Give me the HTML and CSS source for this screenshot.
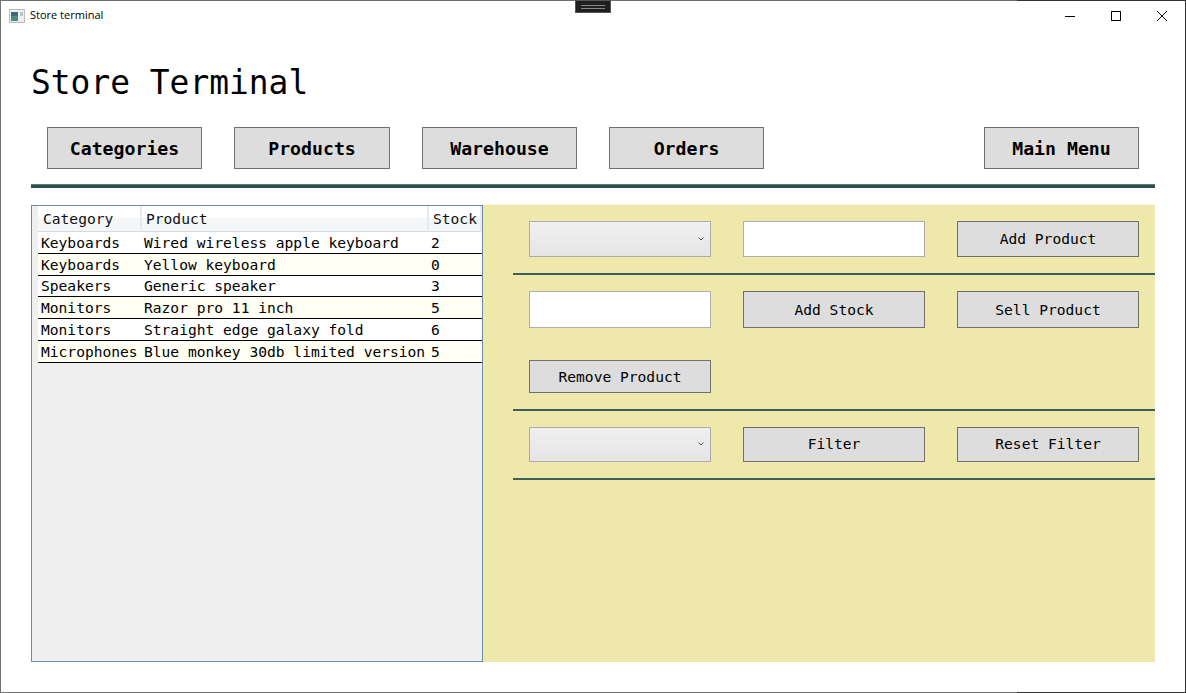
FILE: index.html
```html
<!DOCTYPE html>
<html lang="en">

<head>
    <meta charset="UTF-8">
    <meta name="viewport" content="width=device-width, initial-scale=1.0">
    <title>Store terminal</title>
    <link rel="stylesheet" href="styles.css">
</head>

<body>
    <div class="window">
        <div class="titlebar">
            <svg class="app-icon" width="16" height="16" viewBox="0 0 16 16">
                <rect x="0.5" y="1.5" width="15" height="13" fill="#eef0f0" stroke="#b8bcbc" />
                <rect x="2" y="4" width="7" height="9" fill="#4f8a80" />
                <rect x="2" y="4" width="7" height="4" fill="#3d6878" />
                <rect x="11" y="4" width="3" height="4" fill="#b9c6c6" />
            </svg>
            <span class="window-title">Store terminal</span>
            <div class="window-buttons">
                <svg class="window-btn" width="46" height="30" viewBox="0 0 46 30">
                    <path d="M18 15.5h10" stroke="#000" fill="none" />
                </svg>
                <svg class="window-btn" width="46" height="30" viewBox="0 0 46 30">
                    <rect x="18.5" y="10.5" width="9" height="9" stroke="#000" fill="none" />
                </svg>
                <svg class="window-btn" width="46" height="30" viewBox="0 0 46 30">
                    <path d="M18 10l10 10M28 10l-10 10" stroke="#000" fill="none" />
                </svg>
            </div>
        </div>
        <div class="grip"><span class="grip-lines"></span></div>

        <main class="content">
            <h1 class="page-title">Store Terminal</h1>

            <nav class="main-nav">
                <button class="nav-btn">Categories</button>
                <button class="nav-btn nav-btn-wide">Products</button>
                <button class="nav-btn">Warehouse</button>
                <button class="nav-btn">Orders</button>
                <button class="nav-btn nav-btn-last">Main Menu</button>
            </nav>
            <div class="rule-thick"></div>

            <section class="workspace">
                <div class="grid-panel">
                    <table class="stock-table">
                        <colgroup>
                            <col class="col-category">
                            <col class="col-product">
                            <col class="col-stock">
                        </colgroup>
                        <thead>
                            <tr>
                                <th>Category</th>
                                <th>Product</th>
                                <th>Stock</th>
                            </tr>
                        </thead>
                        <tbody>
                            <tr>
                                <td>Keyboards</td>
                                <td>Wired wireless apple keyboard</td>
                                <td>2</td>
                            </tr>
                            <tr>
                                <td>Keyboards</td>
                                <td>Yellow keyboard</td>
                                <td>0</td>
                            </tr>
                            <tr>
                                <td>Speakers</td>
                                <td>Generic speaker</td>
                                <td>3</td>
                            </tr>
                            <tr>
                                <td>Monitors</td>
                                <td>Razor pro 11 inch</td>
                                <td>5</td>
                            </tr>
                            <tr>
                                <td>Monitors</td>
                                <td>Straight edge galaxy fold</td>
                                <td>6</td>
                            </tr>
                            <tr>
                                <td>Microphones</td>
                                <td>Blue monkey 30db limited version</td>
                                <td>5</td>
                            </tr>
                        </tbody>
                    </table>
                </div>

                <div class="controls">
                    <div class="control-row row-add">
                        <div class="combo"><svg width="6" height="4" viewBox="0 0 6 4"><path d="M0.5 0.5L3 3l2.5-2.5" stroke="#555" fill="none" /></svg></div>
                        <input class="field" type="text">
                        <button class="action-btn">Add Product</button>
                    </div>
                    <div class="rule-thin"></div>
                    <div class="control-row row-stock">
                        <input class="field" type="text">
                        <button class="action-btn">Add Stock</button>
                        <button class="action-btn">Sell Product</button>
                    </div>
                    <div class="control-row row-remove">
                        <button class="action-btn">Remove Product</button>
                    </div>
                    <div class="rule-thin"></div>
                    <div class="control-row row-filter">
                        <div class="combo"><svg width="6" height="4" viewBox="0 0 6 4"><path d="M0.5 0.5L3 3l2.5-2.5" stroke="#555" fill="none" /></svg></div>
                        <button class="action-btn">Filter</button>
                        <button class="action-btn">Reset Filter</button>
                    </div>
                    <div class="rule-thin"></div>
                </div>
            </section>
        </main>
    </div>
</body>

</html>
```

FILE: styles.css
```css
* {
    box-sizing: border-box;
}

html,
body {
    overflow: hidden;
}

body {
    margin: 0;
    background-color: #fff;
    font-family: "DejaVu Sans Mono", monospace;
    color: #000;
}

.window {
    position: relative;
    width: 1186px;
    height: 693px;
    border: 1px solid #707070;
    border-right-color: #333;
    background-color: #fff;
}

/* darker parts of the top and bottom edges */
.window::before,
.window::after {
    content: "";
    position: absolute;
    left: 1016px;
    right: -1px;
    height: 1px;
    background-color: #333;
}

.window::before {
    top: -1px;
}

.window::after {
    bottom: -1px;
}

.titlebar {
    display: flex;
    align-items: center;
    height: 29px;
    padding-left: 8px;
}

.app-icon {
    margin-right: 5px;
}

.window-title {
    position: relative;
    top: -1px;
    font-family: "Open Sans", sans-serif;
    font-size: 11px;
    color: #000;
}

.window-buttons {
    display: flex;
    margin-left: auto;
}

.window-btn {
    display: block;
}

.grip {
    position: absolute;
    top: -1px;
    left: 574px;
    display: flex;
    align-items: center;
    justify-content: center;
    width: 36px;
    height: 13px;
    background-color: #1f1f1f;
    border: 1px solid #555;
}

.grip-lines {
    display: block;
    width: 24px;
    height: 4px;
    border-top: 1px solid #888;
    border-bottom: 1px solid #888;
}

.content {
    padding: 0 30px;
}

.page-title {
    margin: 0;
    padding-top: 33px;
    height: 97px;
    font-size: 32.9px;
    line-height: 40px;
    font-weight: normal;
}

.main-nav {
    display: flex;
    gap: 32px;
    padding: 0 16px;
}

.nav-btn {
    width: 155px;
    height: 42px;
    padding: 0;
    background-color: #ddd;
    border: 1px solid #707070;
    font-family: "DejaVu Sans Mono", monospace;
    font-size: 18.2px;
    font-weight: bold;
    color: #000;
}

.nav-btn-wide {
    width: 156px;
}

.nav-btn-last {
    margin-left: auto;
}

.rule-thick {
    height: 4px;
    margin-top: 15px;
    background-color: #2f4f4f;
    border-top: 1px solid #5f7a78;
}

.workspace {
    display: flex;
    height: 457px;
    margin-top: 17px;
}

.grid-panel {
    width: 452px;
    padding-left: 6px;
    background-color: #efefef;
    border: 1px solid #688caa;
}

.stock-table {
    width: 444px;
    table-layout: fixed;
    border-collapse: separate;
    border-spacing: 0;
    font-size: 14.6px;
}

.col-category {
    width: 104px;
}

.col-product {
    width: 287px;
}

.col-stock {
    width: 53px;
}

.stock-table th {
    height: 26px;
    padding: 0 0 0 4px;
    background: linear-gradient(#fff 50%, #f5f6f7 50%);
    border-right: 2px solid #e8ebee;
    border-bottom: 1px solid #d5dadf;
    font-weight: normal;
    text-align: left;
    color: #111;
}

.stock-table th:first-child {
    padding-left: 5px;
}

.stock-table td {
    height: 21.8px;
    padding: 0 0 0 2px;
    background-color: #fff;
    border-bottom: 1px solid #000;
    white-space: nowrap;
}

.stock-table td:first-child {
    padding-left: 3px;
}

.stock-table tr:nth-child(even) td {
    background-color: #fffff4;
}

.controls {
    flex: 1;
    padding: 16px 0 0 30px;
    background-color: #eee8aa;
    box-shadow: 0 -1px 0 #fbfaf0;
}

.control-row {
    display: grid;
    grid-template-columns: 182px 182px 182px;
    column-gap: 32px;
    padding-left: 16px;
}

.row-add {
    height: 36px;
}

.row-stock {
    height: 37px;
    margin-top: 16px;
}

.row-remove {
    height: 33px;
    margin-top: 32px;
}

.row-filter {
    height: 35px;
    margin-top: 16px;
}

.rule-thin {
    height: 2px;
    margin-top: 16px;
    background-color: #3f5f5c;
}

.combo {
    display: flex;
    align-items: center;
    justify-content: flex-end;
    padding-right: 6px;
    background: linear-gradient(#f0f0f0, #e5e5e5);
    border: 1px solid #acacac;
}

.row-filter .combo {
    padding-bottom: 2px;
}

.field {
    display: block;
    width: 100%;
    height: 100%;
    padding: 0;
    background-color: #fff;
    border: 1px solid #abadb3;
}

.action-btn {
    padding: 0;
    background-color: #ddd;
    border: 1px solid #707070;
    font-family: "DejaVu Sans Mono", monospace;
    font-size: 14.6px;
    color: #000;
}

.row-add .action-btn,
.row-filter .action-btn {
    padding-bottom: 2px;
}
```
